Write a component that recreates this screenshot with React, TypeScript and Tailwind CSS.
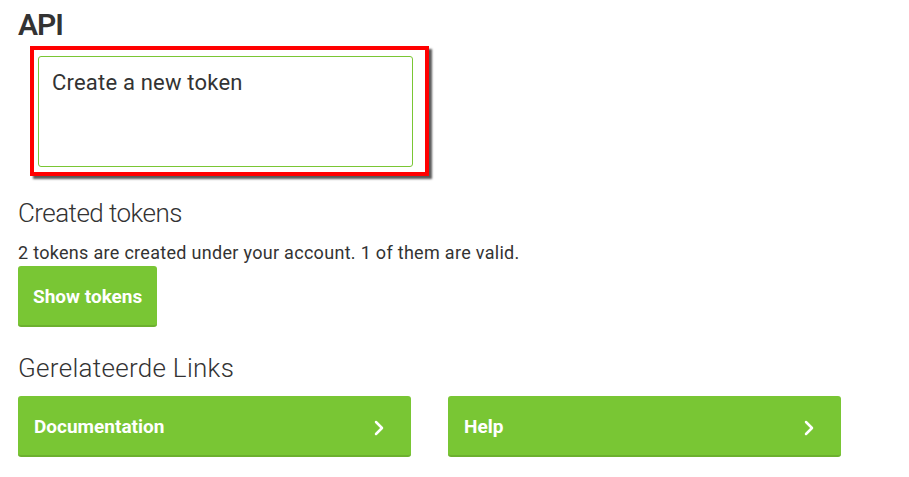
import { ChevronRight } from 'lucide-react';

const links = ['Documentation', 'Help'];

export default function App() {
  return (
    <div className="min-h-screen bg-white pl-[18px] text-[#333] font-['Roboto',sans-serif]">
      {/* Page title */}
      <h1 className="mt-[7px] text-[30px] leading-[36px] font-semibold tracking-[-1px]">API</h1>

      {/* Highlighted create card */}
      <div className="ml-[12px] mt-[3px] w-[399px] h-[130px] border-4 border-[#ff0000] shadow-[3px_3px_2px_rgba(0,0,0,0.65)] bg-white pt-[6px] pl-[4px]">
        <div className="w-[375px] h-[111px] border border-[#7ac634] rounded-[3px] pt-[12px] pl-[13px] text-[22px] leading-[28px] tracking-[0.2px] text-[#333]">
          Create a new token
        </div>
      </div>

      {/* Created tokens */}
      <h2 className="mt-[21px] text-[26px] leading-[32px] font-light tracking-[-0.55px]">Created tokens</h2>
      <p className="mt-[12px] text-[18px] leading-[24px] tracking-[0.3px]">
        2 tokens are created under your account. 1 of them are valid.
      </p>
      <button className="mt-[1px] h-[61px] px-[15px] pt-[4px] flex items-center rounded-[3px] bg-[#79c634] border-b-2 border-[#6cb02e] text-white text-[19px] font-bold">
        Show tokens
      </button>

      {/* Related links */}
      <h2 className="mt-[25px] text-[26px] leading-[32px] font-light tracking-[0.3px]">Gerelateerde Links</h2>
      <div className="mt-[12px] flex gap-[37px]">
        {links.map((label) => (
          <a
            key={label}
            href="#"
            className="w-[393px] h-[61px] flex items-center justify-between pl-[16px] pr-[20px] pt-[4px] rounded-[3px] bg-[#79c634] border-b-2 border-[#6cb02e] text-white text-[19px] font-bold"
          >
            <span>{label}</span>
            <ChevronRight className="w-6 h-6" strokeWidth={2.5} />
          </a>
        ))}
      </div>
    </div>
  );
}
